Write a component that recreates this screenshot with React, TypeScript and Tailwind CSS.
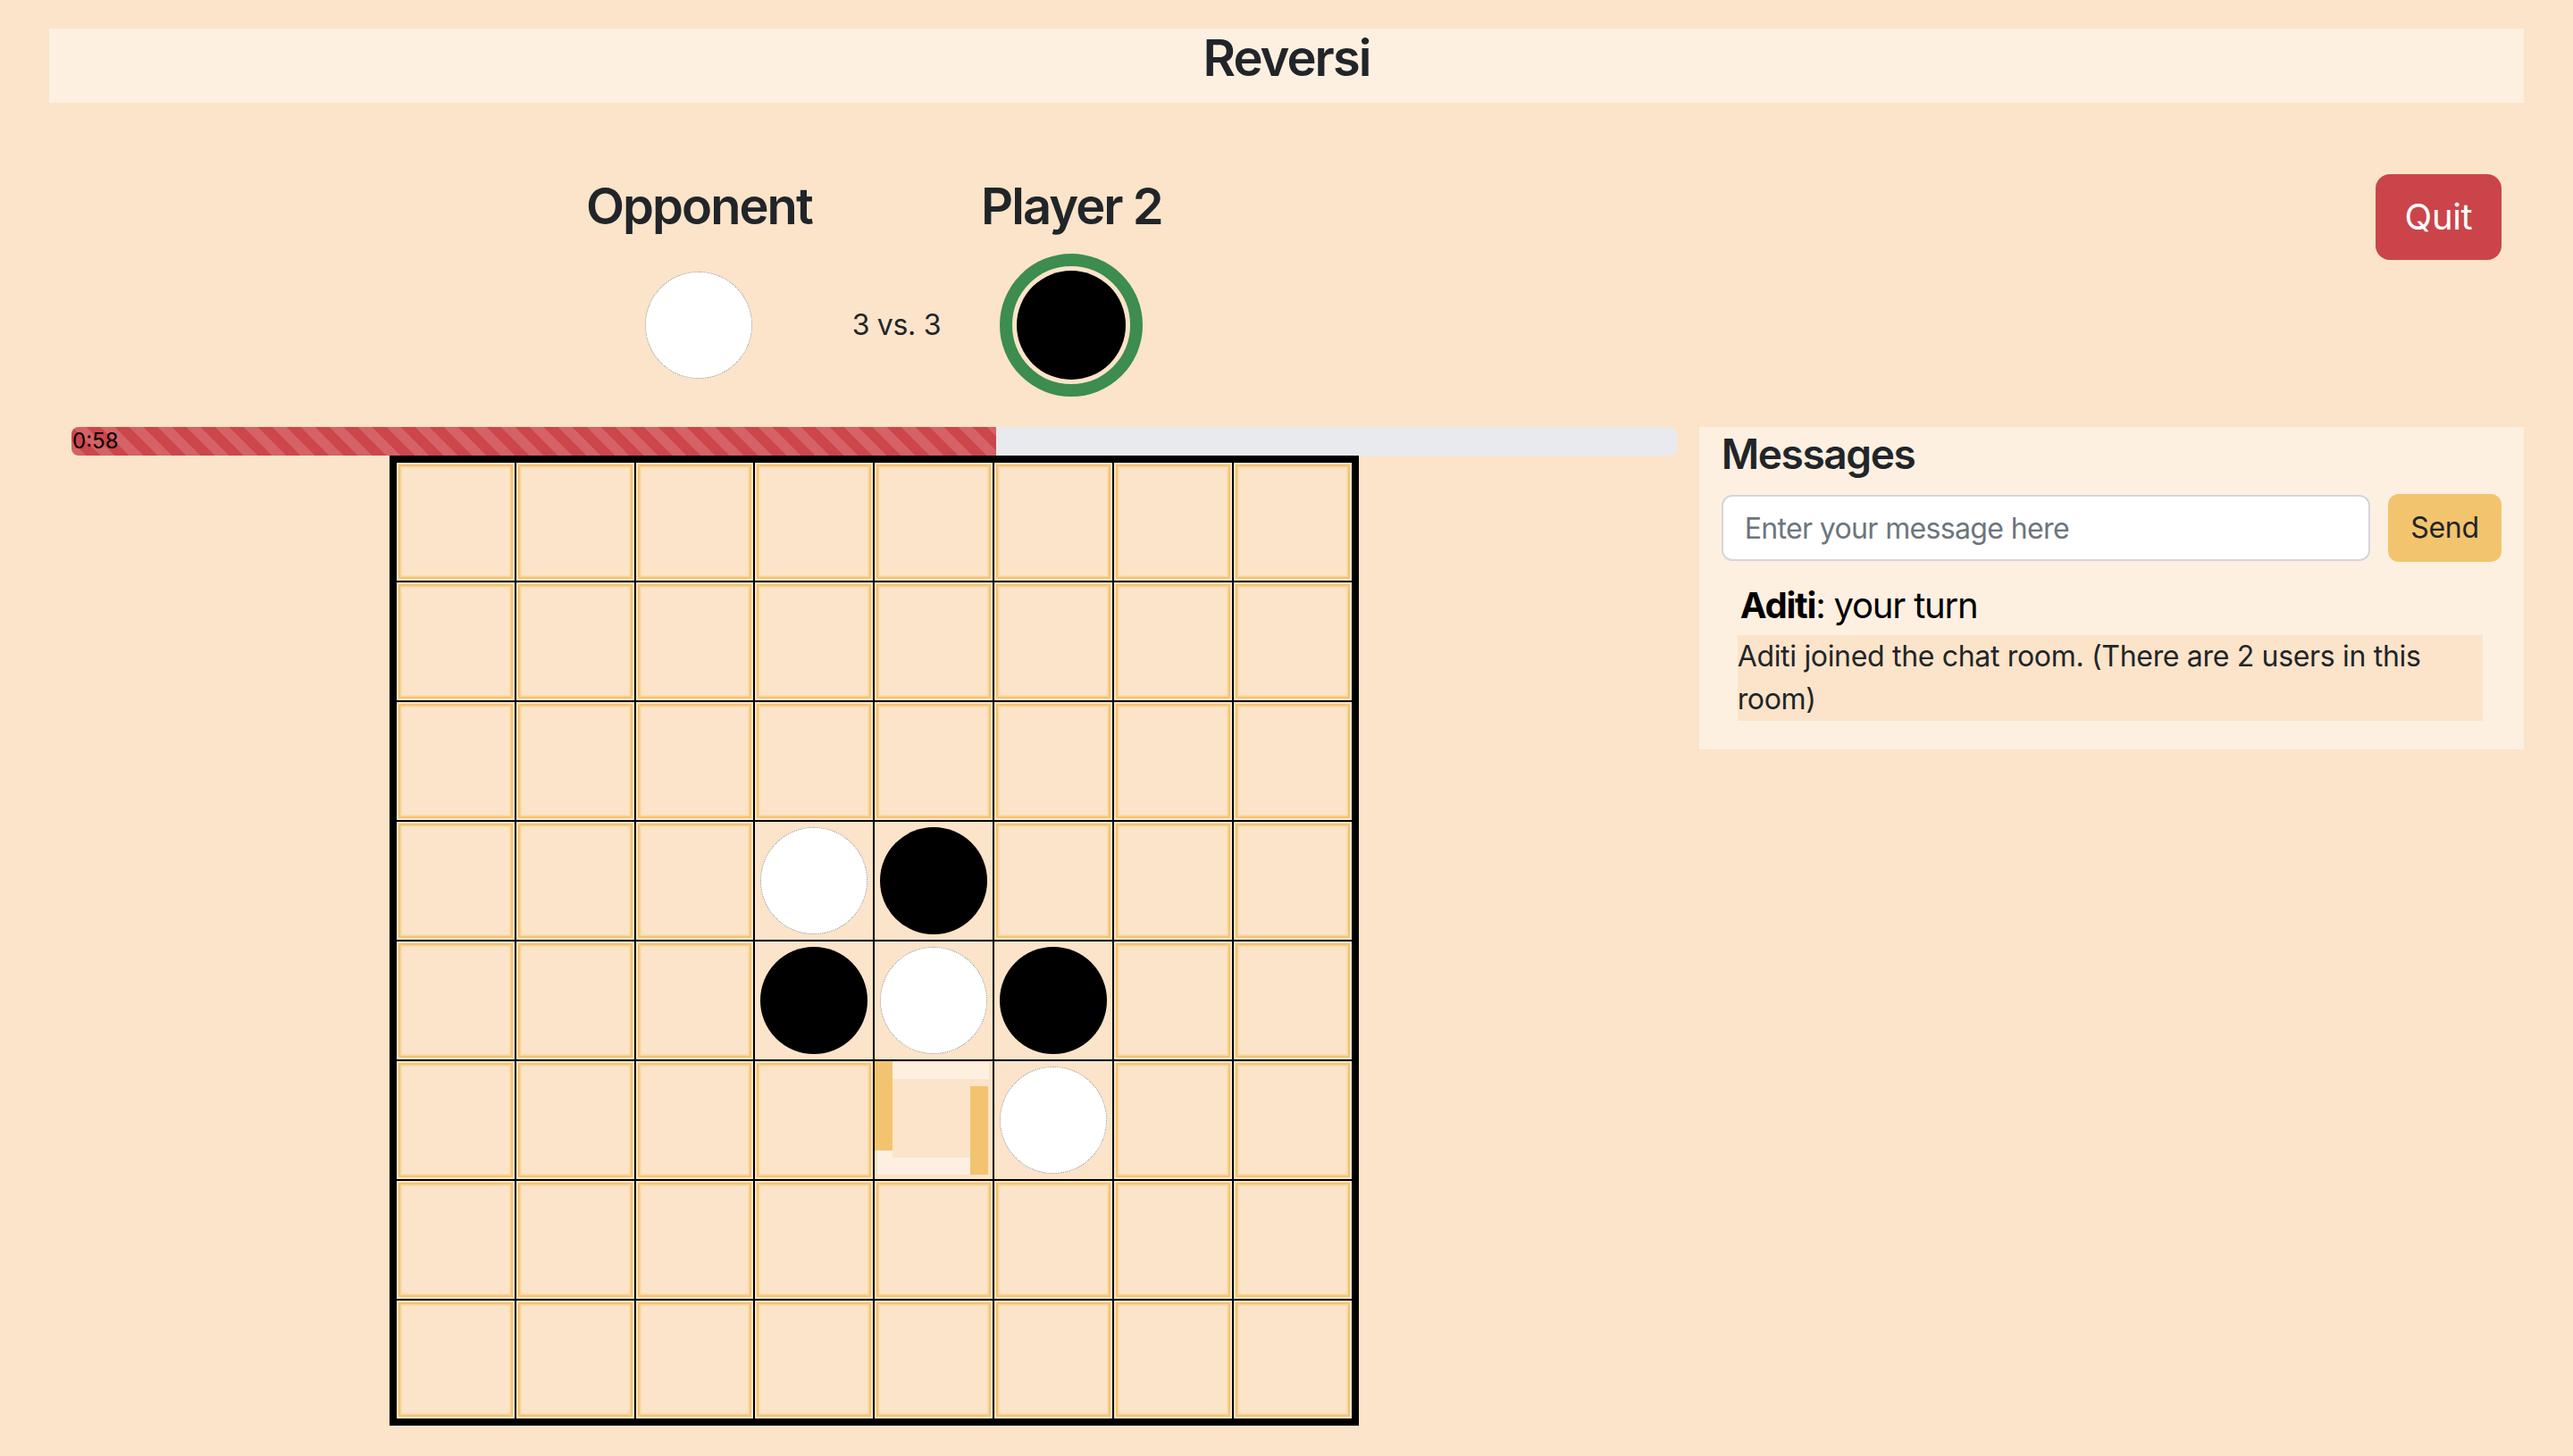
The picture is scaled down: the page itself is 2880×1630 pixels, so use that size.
import React from "react";

type Cell = "W" | "B" | null;

const board: Cell[][] = [
  [null, null, null, null, null, null, null, null],
  [null, null, null, null, null, null, null, null],
  [null, null, null, null, null, null, null, null],
  [null, null, null, "W", "B", null, null, null],
  [null, null, null, "B", "W", "B", null, null],
  [null, null, null, null, null, "W", null, null],
  [null, null, null, null, null, null, null, null],
  [null, null, null, null, null, null, null, null],
];

const hover = { row: 5, col: 4 };
const secondsLeft = 58;
const totalSeconds = 100.7;

function Piece({ color }: { color: "W" | "B" }) {
  return color === "W" ? (
    <div className="w-[120px] h-[120px] rounded-full bg-white border border-dotted border-[#8a8a8a]" />
  ) : (
    <div className="w-[120px] h-[120px] rounded-full bg-black" />
  );
}

function Square({ cell, highlighted }: { cell: Cell; highlighted: boolean }) {
  if (highlighted) {
    return (
      <div className="relative border border-black bg-[#fbe4c9]">
        <div className="absolute left-0 top-0 w-[20px] h-[100px] bg-[#f3c46f]" />
        <div className="absolute left-[20px] top-[2px] w-[108px] h-[18px] bg-[#fdf0e1]" />
        <div className="absolute left-[107px] top-[28px] w-[20px] h-[99px] bg-[#f3c46f]" />
        <div className="absolute left-[3px] top-[100px] w-[104px] h-[27px] bg-[#fdf0e1]" />
        <div className="absolute left-[20px] top-[20px] w-[87px] h-[88px] bg-[#fbe4c9]" />
      </div>
    );
  }
  if (cell) {
    return (
      <div className="border border-black bg-[#fbe4c9] flex items-center justify-center">
        <Piece color={cell} />
      </div>
    );
  }
  return (
    <div className="border border-black bg-[#fbe4c9] p-[2px]">
      <div className="w-full h-full border-2 border-[#f4c470] shadow-[inset_0_0_0_1.5px_#f8d59c]" />
    </div>
  );
}

function PlayerColumn({ name, children }: { name: string; children: React.ReactNode }) {
  return (
    <div className="flex flex-col items-center">
      <h3 className="text-[56px] leading-[67px] font-semibold tracking-[-0.035em] text-[#212529]">
        {name}
      </h3>
      <div className="mt-[19px] h-[160px] flex items-center justify-center">{children}</div>
    </div>
  );
}

export default function App() {
  const pct = (secondsLeft / totalSeconds) * 100;

  return (
    <div className="min-h-screen bg-[#fbe4c9] px-[55px] pt-[32px] font-['Inter',sans-serif] tracking-[-0.02em] text-[#212529]">
      <div className="h-[83px] bg-[#fdf0e1]">
        <h1 className="text-center text-[56px] leading-[67px] font-semibold tracking-[-0.035em]">
          Reversi
        </h1>
      </div>

      <div className="flex items-start mt-[80px]">
        <div className="w-2/3 flex justify-center gap-[45px] pt-[3px]">
          <PlayerColumn name="Opponent">
            <Piece color="W" />
          </PlayerColumn>
          <div className="pt-[86px] h-[246px] flex items-center">
            <span className="text-[32px] leading-[48px] h-[160px] flex items-center">3 vs. 3</span>
          </div>
          <PlayerColumn name="Player 2">
            <div className="w-[160px] h-[160px] rounded-full border-[14px] border-[#3d8c50] p-[5px]">
              <div className="w-full h-full rounded-full bg-black" />
            </div>
          </PlayerColumn>
        </div>
        <div className="w-1/3 flex justify-end pr-[25px]">
          <button className="w-[141px] h-[96px] rounded-[16px] bg-[#cb444a] text-white text-[40px]">
            Quit
          </button>
        </div>
      </div>

      <div className="flex items-start mt-[34px]">
        <div className="w-2/3">
          <div className="mx-[25px] h-[32px] rounded-[8px] bg-[#e9eaee] overflow-hidden flex">
            <div
              className="h-full bg-[#cc464b] bg-[linear-gradient(45deg,rgba(255,255,255,.15)_25%,transparent_25%,transparent_50%,rgba(255,255,255,.15)_50%,rgba(255,255,255,.15)_75%,transparent_75%,transparent)] bg-[length:32px_32px] text-black text-[24px] leading-[32px] tracking-normal pl-[1px]"
              style={{ width: `${pct}%` }}
            >
              0:{secondsLeft}
            </div>
          </div>
          <div className="mx-auto w-[1085px] h-[1086px] border-[7px] border-black grid grid-cols-8 grid-rows-8">
            {board.map((row, r) =>
              row.map((cell, c) => (
                <Square
                  key={`${r}-${c}`}
                  cell={cell}
                  highlighted={r === hover.row && c === hover.col}
                />
              ))
            )}
          </div>
        </div>

        <div className="w-1/3 bg-[#fdf0e1] pt-[3px] px-[25px] pb-[32px]">
          <h4 className="text-[46px] leading-[55px] font-semibold tracking-[-0.03em]">Messages</h4>
          <div className="mt-[17px] flex items-center gap-[20px]">
            <input
              className="flex-1 h-[74px] rounded-[12px] border-2 border-[#d3d6da] bg-white px-[24px] text-[32px] tracking-[-0.02em] placeholder:text-[#6c757d] outline-none"
              placeholder="Enter your message here"
            />
            <button className="w-[127px] h-[76px] rounded-[12px] bg-[#f3c46e] text-[32px] text-[#212529]">
              Send
            </button>
          </div>
          <div className="mt-[25px] ml-[18px] w-[834px]">
            <p className="text-[40px] leading-[48px] text-black tracking-[-0.03em] ml-[3px]">
              <b className="font-bold">Aditi</b>: your turn
            </p>
            <div className="mt-[9px] bg-[#fbe4c9] text-[32px] leading-[48px]">
              Aditi joined the chat room. (There are 2 users in this room)
            </div>
          </div>
        </div>
      </div>
    </div>
  );
}
